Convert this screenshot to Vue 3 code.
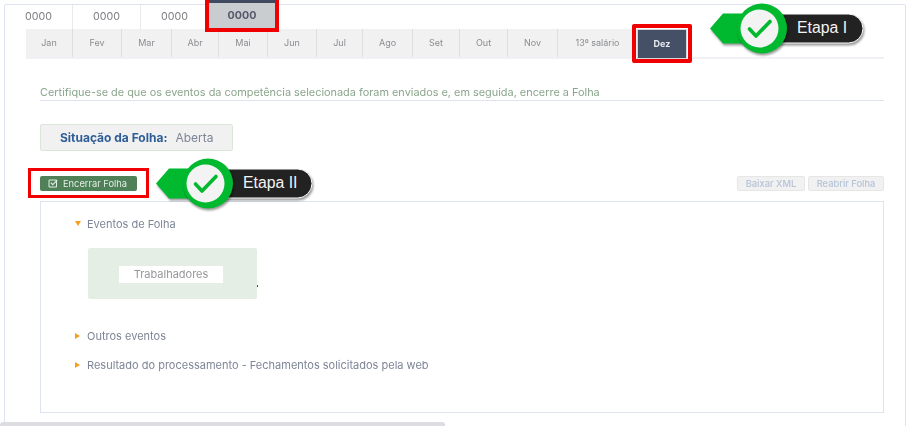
<template>
  <div class="page">
    <div class="panel">
      <div class="years">
        <div v-for="(year, i) in years" :key="i" class="year" :class="{ active: i === 3 }">{{ year }}</div>
      </div>

      <div class="months">
        <div
          v-for="month in months"
          :key="month.label"
          class="month"
          :class="{ active: month.label === 'Dez' }"
          :style="{ width: month.width + 'px' }"
        >
          {{ month.label }}
        </div>
      </div>

      <div class="content">
        <p class="hint">Certifique-se de que os eventos da competência selecionada foram enviados e, em seguida, encerre a Folha</p>

        <div class="status">
          <strong>Situação da Folha:</strong>
          <span>Aberta</span>
        </div>

        <div class="actions">
          <button class="close-btn">
            <svg width="10" height="9" viewBox="0 0 10 9">
              <path d="M1 1h7.500v7H1z" fill="none" stroke="#e3efe6" stroke-width="1" />
              <path d="M2.800 3.600l2 2 4.400-4.400" fill="none" stroke="#e3efe6" stroke-width="1.100" />
            </svg>
            Encerrar Folha
          </button>
          <div class="right-actions">
            <button class="muted-btn xml">Baixar XML</button>
            <button class="muted-btn reopen">Reabrir Folha</button>
          </div>
        </div>

        <div class="events">
          <div class="event open"><i class="arrow-down"></i>Eventos de Folha</div>
          <div class="workers">
            <div class="workers-label">Trabalhadores</div>
            <i class="dot"></i>
          </div>
          <div class="event other"><i class="arrow-right"></i>Outros eventos</div>
          <div class="event result"><i class="arrow-right"></i>Resultado do processamento - Fechamentos solicitados pela web</div>
        </div>
      </div>
    </div>

    <div class="bottom-bar"></div>

    <!-- marcacoes do tutorial por cima da tela -->
    <div class="mark mark-year"></div>
    <div class="mark mark-month"></div>
    <div class="mark mark-close"></div>

    <div v-for="step in steps" :key="step.label" class="callout" :class="step.cls">
      <svg width="160" height="56" viewBox="0 0 160 56">
        <rect x="50" y="12" :width="step.pill" height="29" rx="14.500" fill="#222" stroke="#fff" stroke-width="1" class="shadow" />
        <path d="M0 26.500L13 11.500H40V41.500H13z" fill="#00b92f" class="shadow" />
        <circle cx="52" cy="26.500" r="25" fill="#00b92f" class="shadow" />
        <circle cx="49.500" cy="26.500" r="19" fill="#f3f3f3" />
        <path d="M39.500 27l6.500 7L60 19.500" fill="none" stroke="#00b92f" stroke-width="3.600" stroke-linecap="round" stroke-linejoin="round" />
      </svg>
      <span>{{ step.label }}</span>
    </div>
  </div>
</template>

<script setup>
const years = ['0000', '0000', '0000', '0000']

const months = [
  { label: 'Jan', width: 47 },
  { label: 'Fev', width: 49 },
  { label: 'Mar', width: 50 },
  { label: 'Abr', width: 47 },
  { label: 'Mai', width: 49 },
  { label: 'Jun', width: 49 },
  { label: 'Jul', width: 46 },
  { label: 'Ago', width: 50 },
  { label: 'Set', width: 47 },
  { label: 'Out', width: 48 },
  { label: 'Nov', width: 50 },
  { label: '13º salário', width: 79 },
  { label: 'Dez', width: 50 }
]

const steps = [
  { label: 'Etapa I', cls: 'step-one', pill: 103 },
  { label: 'Etapa II', cls: 'step-two', pill: 106 }
]
</script>

<style>
body {
  background: #fff;
}
</style>

<style scoped>
.page {
  position: relative;
  width: 910px;
  height: 426px;
  overflow: hidden;
  background: #fff;
  font-family: Inter, "Liberation Sans", sans-serif;
}
.panel {
  box-sizing: border-box;
  width: 902px;
  height: 424px;
  margin-left: 4px;
  padding-left: 21px;
  padding-right: 21px;
  border: 1px solid #dfe3f1;
  border-radius: 2px;
  position: relative;
  top: 4px;
  filter: blur(0.35px);
}
.years {
  display: flex;
  height: 24px;
  margin-left: -21px;
}
.year {
  box-sizing: border-box;
  width: 68px;
  line-height: 23px;
  text-align: center;
  font-size: 10.700px;
  color: #7d7f83;
  border-right: 1px solid #e9e9ec;
}
.year.active {
  width: 66px;
  height: 28px;
  margin-top: -5px;
  line-height: 26px;
  border-right: 0;
  border-top: 3px solid #3f4a60;
  background: #c9cdd0;
  color: #55596a;
  font-weight: 700;
}
.months {
  display: flex;
  height: 28px;
  border-bottom: 2px solid #f0f1f4;
}
.month {
  box-sizing: border-box;
  line-height: 28px;
  text-align: center;
  font-size: 9px;
  color: #8a8c90;
  background: #f1f1f1;
  border-right: 1px solid #dedede;
}
.month:nth-last-child(2) {
  border-right: 0;
}
.month.active {
  height: 30px;
  background: #454f66;
  border: 1px solid #d5d8de;
  color: #e6e8ee;
  font-weight: 700;
}
.content {
  padding-left: 14px;
}
.hint {
  margin: 27px 0 0;
  height: 14px;
  border-bottom: 1px solid #dfe3f1;
  font-size: 10.900px;
  line-height: 13px;
  color: #8aa58c;
  white-space: nowrap;
}
.status {
  box-sizing: border-box;
  display: flex;
  align-items: center;
  gap: 8px;
  width: 193px;
  height: 27px;
  margin-top: 23px;
  padding-left: 19px;
  background: #f1f1f1;
  border: 1px solid #dbe5da;
  border-radius: 2px;
  font-size: 12px;
  color: #7d8596;
}
.status strong {
  color: #2f5e96;
  font-weight: 700;
}
.actions {
  display: flex;
  align-items: center;
  justify-content: space-between;
  height: 15px;
  margin-top: 25px;
}
.close-btn {
  display: flex;
  align-items: center;
  gap: 5px;
  width: 97px;
  height: 15px;
  padding: 0 0 0 8px;
  background: #4f8058;
  border: 0;
  border-radius: 2px;
  font-family: inherit;
  font-size: 9.300px;
  color: #e3efe6;
}
.right-actions {
  display: flex;
  gap: 3px;
}
.muted-btn {
  height: 15px;
  padding: 0;
  background: #f1f1f1;
  border: 1px solid #e6e6e6;
  border-radius: 2px;
  font-family: inherit;
  font-size: 9.300px;
  font-weight: 500;
  color: #b5c3d6;
}
.xml {
  width: 68px;
}
.reopen {
  width: 76px;
}
.events {
  box-sizing: border-box;
  height: 212px;
  margin-top: 10px;
  padding: 15px 0 0 34px;
  border: 1px solid #dfe3f1;
}
.event {
  display: flex;
  align-items: center;
  height: 13px;
  font-size: 11px;
  color: #7d8596;
}
.arrow-down {
  width: 0;
  height: 0;
  margin-right: 6px;
  border-left: 3px solid transparent;
  border-right: 3px solid transparent;
  border-top: 5px solid #f5a020;
}
.arrow-right {
  width: 0;
  height: 0;
  margin-right: 7px;
  border-top: 3px solid transparent;
  border-bottom: 3px solid transparent;
  border-left: 5px solid #f5a020;
}
.workers {
  position: relative;
  box-sizing: border-box;
  width: 169px;
  height: 51px;
  margin: 18px 0 0 13px;
  padding: 18px 0 0 31px;
  background: #e4eee4;
  border-radius: 2px;
}
.workers-label {
  width: 104px;
  height: 17px;
  line-height: 17px;
  text-align: center;
  background: #fff;
  font-size: 11px;
  color: #96979a;
}
.dot {
  position: absolute;
  right: -1px;
  top: 37px;
  width: 1px;
  height: 2px;
  background: #f00;
}
.event.other {
  margin-top: 30px;
}
.event.result {
  margin-top: 16px;
}
.bottom-bar {
  position: absolute;
  left: 0;
  top: 422px;
  width: 445px;
  height: 6px;
  background: #dcdde1;
  border-radius: 3px;
}
.mark {
  position: absolute;
  box-sizing: border-box;
  border: 4px solid #f00000;
}
.mark-year {
  left: 205px;
  top: -4px;
  width: 74px;
  height: 36px;
}
.mark-month {
  left: 632px;
  top: 24px;
  width: 60px;
  height: 39px;
  border-radius: 2px;
}
.mark-close {
  left: 28px;
  top: 168px;
  width: 121px;
  height: 30px;
  border-width: 3px;
}
.callout {
  position: absolute;
  width: 160px;
  height: 56px;
}
.callout svg {
  display: block;
}
.callout .shadow {
  filter: drop-shadow(1px 2px 1px rgba(0, 0, 0, 0.4));
}
.callout span {
  position: absolute;
  top: 15px;
  left: 87px;
  font-family: "Liberation Sans", sans-serif;
  font-size: 15.800px;
  line-height: 22px;
  color: #f4f4f4;
}
.step-one {
  left: 710px;
  top: 2px;
}
.step-two {
  left: 156px;
  top: 157px;
}
</style>
